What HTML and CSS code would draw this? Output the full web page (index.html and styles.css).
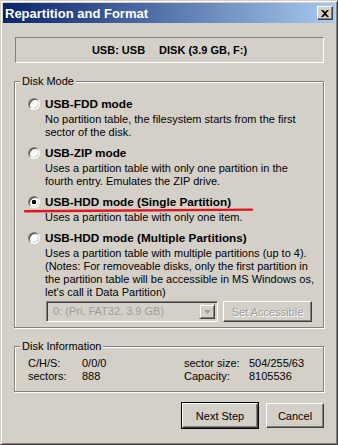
FILE: index.html
```html
<!DOCTYPE html>
<html lang="en">
<head>
  <meta charset="UTF-8">
  <title>Repartition and Format</title>
  <link rel="stylesheet" href="styles.css">
</head>
<body>
  <div class="window">
    <div class="titlebar">
      <span class="title">Repartition and Format</span>
      <button class="close" title="Close">
        <svg width="8" height="7" viewBox="0 0 8 7"><path d="M0 0h2l2 2 2-2h2L5 3.5 8 7H6L4 5 2 7H0l3-3.5z" fill="#000"/></svg>
      </button>
    </div>

    <div class="content">
      <div class="device">USB: USB<span class="disk">DISK (3.9 GB, F:)</span></div>

      <fieldset class="group mode">
        <legend>Disk Mode</legend>
        <div class="options">
          <div class="option">
            <label class="opt-head"><input type="radio" name="mode" class="radio">USB-FDD mode</label>
            <p class="desc">No partition table, the filesystem starts from the first<br>sector of the disk.</p>
          </div>
          <div class="option">
            <label class="opt-head"><input type="radio" name="mode" class="radio">USB-ZIP mode</label>
            <p class="desc">Uses a partition table with only one partition in the<br>fourth entry. Emulates the ZIP drive.</p>
          </div>
          <div class="option marked">
            <label class="opt-head"><input type="radio" name="mode" class="radio" checked>USB-HDD mode (Single Partition)</label>
            <p class="desc">Uses a partition table with only one item.</p>
            <svg class="mark" width="230" height="5" viewBox="0 0 230 5"><path d="M1 3.2 C60 2.6 140 2.4 228 1.6" stroke="#e3141c" stroke-width="2.4" fill="none" stroke-linecap="round"/></svg>
          </div>
          <div class="option">
            <label class="opt-head"><input type="radio" name="mode" class="radio">USB-HDD mode (Multiple Partitions)</label>
            <p class="desc">Uses a partition table with multiple partitions (up to 4).<br>(Notes: For removeable disks, only the first partition in<br>the partition table will be accessible in MS Windows os,<br>let's call it Data Partition)</p>
            <div class="part-row">
              <div class="combo">
                <span class="combo-text">0: (Pri, FAT32, 3.9 GB)</span>
                <span class="combo-btn">
                  <svg width="7" height="4" viewBox="0 0 7 4"><path d="M0 0h7L3.5 4z" fill="#a09c94"/></svg>
                </span>
              </div>
              <button class="btn disabled" disabled>Set Accessible</button>
            </div>
          </div>
        </div>
      </fieldset>

      <fieldset class="group info">
        <legend>Disk Information</legend>
        <div class="info-grid">
          <span>C/H/S:</span><span>0/0/0</span><span>sector size:</span><span>504/255/63</span>
          <span>sectors:</span><span>888</span><span>Capacity:</span><span>8105536</span>
        </div>
      </fieldset>

      <div class="actions">
        <button class="btn default next">Next Step</button>
        <button class="btn cancel">Cancel</button>
      </div>
    </div>
  </div>
</body>
</html>
```

FILE: styles.css
```css
* {
  box-sizing: border-box;
}
html, body {
  margin: 0;
}
body {
  background: #d4d0c8;
  font-family: "Liberation Sans", Arial, sans-serif;
  font-size: 11px;
  line-height: 13px;
  color: #000;
}
.window {
  width: 338px;
  height: 445px;
  padding: 2px;
  border: 1px solid;
  border-color: #d4d0c8 #404040 #404040 #d4d0c8;
  box-shadow: inset 1px 1px 0 #fff, inset -1px -1px 0 #808080;
  display: flex;
  flex-direction: column;
}
.titlebar {
  height: 20px;
  padding: 0 2px 0 2px;
  background: linear-gradient(to right, #0a246a, #a6caf0);
  display: flex;
  align-items: center;
  justify-content: space-between;
}
.title {
  color: #fff;
  font-weight: bold;
  font-size: 13px;
}
.close {
  width: 16px;
  height: 14px;
  padding: 0;
  margin: 0;
  background: #d4d0c8;
  border: 1px solid;
  border-color: #fff #404040 #404040 #fff;
  box-shadow: inset -1px -1px 0 #808080;
  display: flex;
  align-items: center;
  justify-content: center;
}
.content {
  flex: 1;
  padding: 14px 11px 0 11px;
}
.device {
  height: 26px;
  margin-left: 1px;
  border: 1px solid;
  border-color: #808080 #fff #fff #808080;
  font-weight: bold;
  display: flex;
  align-items: center;
  justify-content: center;
}
.disk {
  margin-left: 14px;
}
.group {
  margin: 12px 0 0 0;
  min-width: 0;
  border: 1px solid #808080;
  box-shadow: inset 1px 1px 0 #fff, 1px 1px 0 #fff;
}
.group legend {
  padding: 0 2px;
  margin-left: -8px;
  line-height: 13px;
  background: #d4d0c8;
}
.mode {
  padding: 9px 0 5px 13px;
}
.options {
  display: flex;
  flex-direction: column;
  gap: 7px;
}
.option {
  position: relative;
}
.opt-head {
  display: flex;
  align-items: center;
  gap: 5px;
  font-weight: bold;
  font-size: 11.75px;
}
.radio {
  appearance: none;
  -webkit-appearance: none;
  width: 12px;
  height: 12px;
  margin: 0;
  border-radius: 50%;
  border: 1px solid;
  border-color: #808080 #fff #fff #808080;
  box-shadow: inset 1px 1px 0 #404040, inset -1px -1px 0 #d4d0c8;
  background: #fff;
}
.radio:checked {
  background: radial-gradient(circle, #000 0 2px, #fff 2.5px);
}
.desc {
  margin: 3px 0 0 17px;
}
.mark {
  position: absolute;
  left: -4px;
  top: 13px;
}
.part-row {
  display: flex;
  gap: 5px;
  margin: 2px 0 0 18px;
}
.combo {
  width: 172px;
  height: 21px;
  border: 1px solid;
  border-color: #808080 #fff #fff #808080;
  box-shadow: inset 1px 1px 0 #404040, inset -1px -1px 0 #d4d0c8;
  display: flex;
  align-items: center;
  padding: 2px;
}
.combo-text {
  flex: 1;
  padding-left: 4px;
  color: #a09c94;
}
.combo-btn {
  width: 16px;
  height: 15px;
  border: 1px solid;
  border-color: #d4d0c8 #404040 #404040 #d4d0c8;
  box-shadow: inset 1px 1px 0 #fff, inset -1px -1px 0 #808080;
  display: flex;
  align-items: center;
  justify-content: center;
}
.btn {
  font-family: inherit;
  font-size: 11px;
  height: 21px;
  padding: 0;
  background: #d4d0c8;
  color: #000;
  border: 1px solid;
  border-color: #fff #404040 #404040 #fff;
  box-shadow: inset -1px -1px 0 #808080;
}
.btn.disabled {
  width: 89px;
  color: #a09c94;
  text-shadow: 1px 1px 0 #fff;
}
.info {
  padding: 4px 0 8px 13px;
}
.info-grid {
  display: grid;
  grid-template-columns: 54px 102px 65px auto;
}
.actions {
  display: flex;
  justify-content: flex-end;
  gap: 8px;
  margin-top: 11px;
}
.actions .btn {
  height: 25px;
}
.next {
  width: 76px;
  outline: 1px solid #000;
  outline-offset: 0;
  border-color: #fff #404040 #404040 #fff;
}
.cancel {
  width: 58px;
}
```
